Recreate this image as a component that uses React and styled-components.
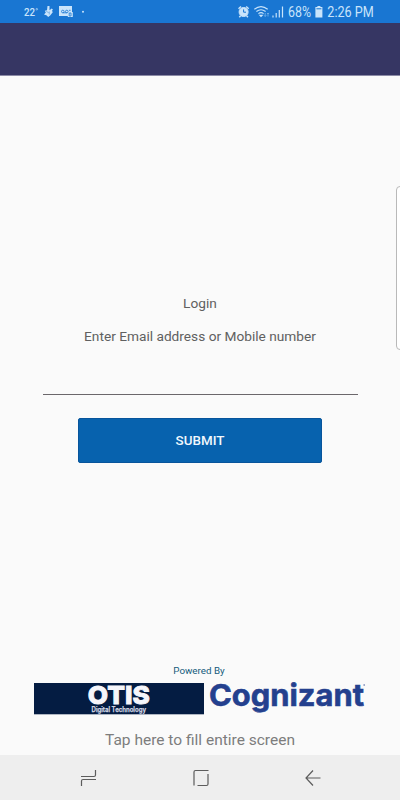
import React from 'react';
import styled, { createGlobalStyle } from 'styled-components';

const GlobalStyle = createGlobalStyle`
  * {
    box-sizing: border-box;
  }
  body {
    margin: 0;
    background: #fafafa;
    font-family: Roboto, 'Liberation Sans', sans-serif;
  }
`;

const Screen = styled.div`
  display: flex;
  flex-direction: column;
  width: 400px;
  height: 800px;
  background: #fafafa;
  overflow: hidden;
`;

const StatusBar = styled.header`
  display: flex;
  justify-content: space-between;
  flex: 0 0 23px;
  background: #1976d2;
  padding: 0 25px 0 24px;
  svg {
    display: block;
    overflow: visible;
  }
`;

const StatusText = styled.text`
  font-family: Roboto, sans-serif;
  font-size: ${props => props.$size || 14}px;
  font-weight: ${props => props.$weight || 400};
  fill: #c9e4fb;
`;

const AppBar = styled.div`
  flex: 0 0 53px;
  background: #363663;
  border-bottom: 1px solid #8c8ba6;
`;

const Content = styled.main`
  position: relative;
  flex: 1;
  display: flex;
  flex-direction: column;
  align-items: center;
  padding-top: 217px;
`;

const EdgeHandle = styled.div`
  position: absolute;
  top: 110px;
  right: -4px;
  width: 8px;
  height: 164px;
  background: #fff;
  border: 1px solid #b9b9b9;
  border-radius: 4px;
`;

const Title = styled.div`
  font-size: 13.7px;
  line-height: 20px;
  color: #606060;
`;

const Label = styled.label`
  margin-top: 13px;
  font-size: 13.7px;
  line-height: 20px;
  color: #606060;
`;

const Input = styled.input`
  width: 315px;
  height: 49px;
  border: 0;
  border-bottom: 1px solid #6b676b;
  background: transparent;
  outline: none;
`;

const Submit = styled.button`
  width: 244px;
  height: 45px;
  margin-top: 23px;
  border: 1px solid #07549b;
  border-radius: 2px;
  background: #0762ae;
  color: #f1f8fd;
  font-family: inherit;
  font-size: 13.4px;
  font-weight: 500;
`;

const Footer = styled.footer`
  display: flex;
  flex-direction: column;
  align-items: center;
  margin-top: auto;
`;

const Powered = styled.div`
  margin-bottom: 5px;
  padding-right: 2px;
  font-size: 9.8px;
  line-height: 15px;
  color: #145a7c;
`;

const Logos = styled.div`
  display: flex;
  width: 400px;
  height: 36px;
  padding-left: 34px;
  svg {
    display: block;
    overflow: visible;
  }
`;

const LogoText = styled.text`
  font-family: Inter, sans-serif;
  font-size: ${props => props.$size}px;
  font-weight: ${props => props.$weight};
  fill: ${props => props.$color};
  stroke: ${props => props.$color};
  stroke-width: ${props => props.$stroke}px;
`;

const FillScreen = styled.div`
  margin-top: 11px;
  padding-bottom: 5px;
  font-size: 15.5px;
  line-height: 20px;
  color: #7d7d7d;
`;

const NavBar = styled.nav`
  display: flex;
  align-items: center;
  justify-content: space-between;
  flex: 0 0 45px;
  padding: 1px 79px 0 80px;
  background: #eee;
  svg {
    fill: none;
    stroke: #5c5c5c;
    stroke-width: 1.2;
  }
`;

const StatusLeft = () => (
  <svg width="70" height="23" viewBox="24 0 70 23">
    <StatusText x="24" y="15.5" $size={10.5} $weight={500} textLength="11" lengthAdjust="spacingAndGlyphs">22</StatusText>
    <circle cx="36.8" cy="9.2" r="0.8" fill="none" stroke="#c9e4fb" strokeWidth="0.6" />
    {/* Assistant figure */}
    <path d="M47.5 6h2v4.2l2.2-1.8 1.2 1-1 1.6 1 1-2.5 3.2-2.2 1.8-1.8-1.8-2.4-.8 1.8-2-1-1.6 2.2-.6z" fill="#c9e4fb" />
    <path d="M46.2 11.2l2.6 1.6M49.3 11.5v3" stroke="#5d9fdd" strokeWidth=".7" />
    {/* Voicemail card */}
    <path d="M59 6h13v6h.8v5h-5v-1H59z" fill="#c9e4fb" />
    <g fill="none" stroke="#1976d2" strokeWidth=".8">
      <circle cx="62.8" cy="11.5" r="1.3" />
      <circle cx="66.8" cy="11.5" r="1.3" />
      <path d="M62.8 12.8h4M69 10.3h1.6M69.2 13h1.8v3h-1.8z" />
    </g>
    <circle cx="83" cy="11.7" r="1" fill="#c9e4fb" />
  </svg>
);

const StatusRight = () => (
  <svg width="137" height="23" viewBox="238 0 137 23">
    {/* Alarm */}
    <g fill="#c9e4fb" stroke="#c9e4fb">
      <circle cx="243.6" cy="12" r="4.5" />
      <path d="M238.5 8.7l2.5-2.2M248.7 8.7l-2.5-2.2M240.6 15.8l-1.3 1.5M246.6 15.8l1.3 1.5" fill="none" strokeWidth="1.5" />
      <path d="M243.6 9.4v2.8h2.4" fill="none" stroke="#1976d2" strokeWidth="1" />
    </g>
    {/* Wifi */}
    <g fill="none" stroke="#c9e4fb" strokeWidth="1.1">
      <path d="M254.3 9.3q6.7-5.4 13.4 0M256.4 11.5q4.6-3.6 9.2 0M258.4 13.6q2.6-2 5.2 0" />
      <path d="M259.8 15.2l1.2 1.2 1.2-1.2z" fill="#c9e4fb" />
      <path d="M265.2 13v3.5M268 16.5V13M264.2 15.4l1 1 1-1M267 14l1-1 1 1" stroke="#79b5ea" strokeWidth=".8" />
    </g>
    {/* Signal */}
    <path d="M273 15.5v2M276.2 13v4.5M279.3 10v7.5M282.5 6.5v11" stroke="#c9e4fb" strokeWidth="1.2" />
    <StatusText x="288" y="17.3" textLength="23" lengthAdjust="spacingAndGlyphs">68%</StatusText>
    {/* Battery */}
    <path d="M317.4 6h3v1h2v10.4h-7V7h2z" fill="#c9e4fb" />
    <path d="M316.4 8.7h5" stroke="#4b96dd" strokeWidth="1.4" />
    <StatusText x="327.3" y="17.3" textLength="46.5" lengthAdjust="spacingAndGlyphs">2:26 PM</StatusText>
  </svg>
);

const OtisLogo = () => (
  <svg width="170" height="32" viewBox="34 683 170 32">
    <rect x="34" y="683" width="170" height="31.3" fill="#041c42" />
    <LogoText x="87.8" y="703.6" $size={25} $weight={800} $color="#f6f6fb" $stroke={0.9} textLength="62" lengthAdjust="spacingAndGlyphs">OTIS</LogoText>
    <LogoText x="91.5" y="712.2" $size={7} $weight={600} $color="#d7dbe6" $stroke={0.25} textLength="54.5" lengthAdjust="spacingAndGlyphs">Digital Technology</LogoText>
  </svg>
);

const CognizantLogo = () => (
  <svg width="162" height="36" viewBox="204 683 162 36">
    <LogoText x="209" y="705.6" $size={30.5} $weight={700} $color="#24408e" $stroke={0.6} textLength="155" lengthAdjust="spacingAndGlyphs">Cognizant</LogoText>
    <circle cx="364.2" cy="685" r=".9" fill="#8d9bc2" />
  </svg>
);

const App = () => (
  <>
    <GlobalStyle />
    <Screen>
      <StatusBar>
        <StatusLeft />
        <StatusRight />
      </StatusBar>
      <AppBar />
      <Content>
        <EdgeHandle />
        <Title>Login</Title>
        <Label htmlFor="account">Enter Email address or Mobile number</Label>
        <Input id="account" />
        <Submit>SUBMIT</Submit>
        <Footer>
          <Powered>Powered By</Powered>
          <Logos>
            <OtisLogo />
            <CognizantLogo />
          </Logos>
          <FillScreen>Tap here to fill entire screen</FillScreen>
        </Footer>
      </Content>
      <NavBar>
        <svg width="17" height="18" viewBox="0 0 17 18">
          <path d="M1 7.5h13q1.5 0 1.5-1.5V1M16 10.5H3Q1.5 10.5 1.5 12v5" />
        </svg>
        <svg width="17" height="18" viewBox="0.5 0 17 18">
          <path d="M1.5 16.5V3q0-1.5 1.5-1.5h13M15.5 5v10q0 1.5-1.5 1.5H5" />
        </svg>
        <svg width="16" height="18" viewBox="0 0 16 18">
          <path d="M15.5 9H1M8 1.5L1 9l7 7.5" />
        </svg>
      </NavBar>
    </Screen>
  </>
);

export default App;
